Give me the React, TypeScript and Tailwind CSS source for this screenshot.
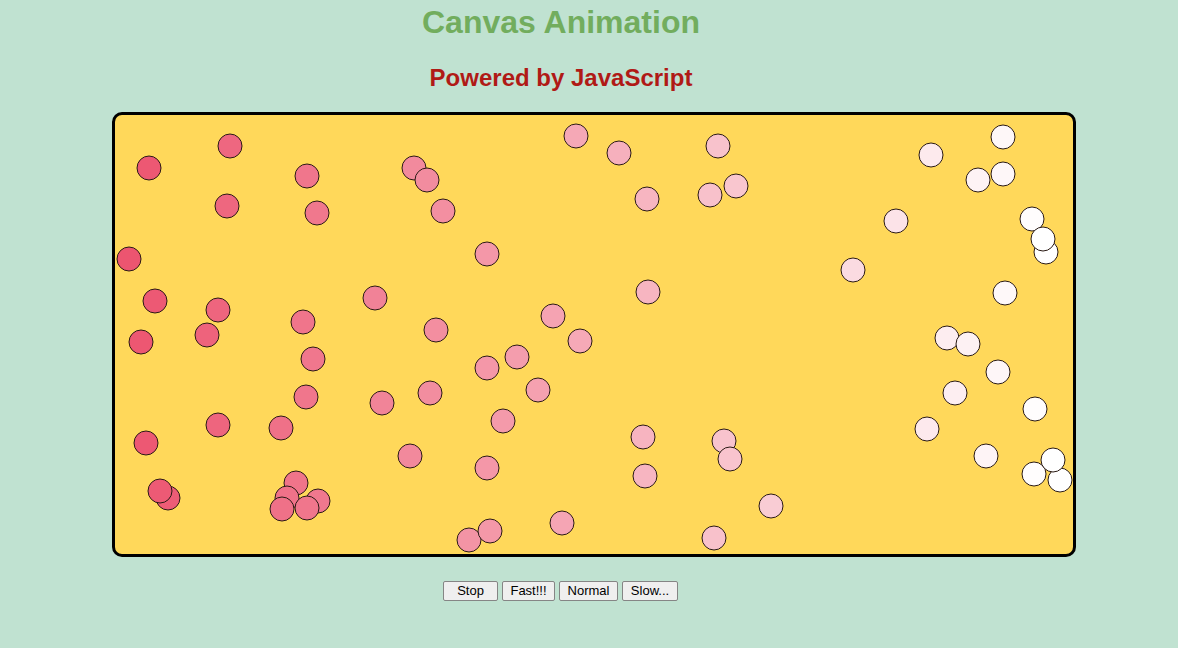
import React from 'react';

// ball centres, in page coordinates (canvas inner area starts at 115,116)
const balls: [number, number][] = [
  [149, 168], [230, 146], [307, 176], [227, 206], [317, 213], [414, 168], [427, 180],
  [443, 211], [129, 259], [487, 254], [155, 301], [218, 310], [375, 298], [141, 342],
  [207, 335], [303, 322], [436, 330], [313, 359], [553, 316], [580, 341], [517, 357],
  [487, 368], [306, 397], [430, 393], [382, 403], [538, 390], [146, 443], [218, 425],
  [281, 428], [503, 421], [410, 456], [487, 468], [168, 498], [160, 491], [296, 483],
  [287, 498], [318, 501], [282, 509], [307, 508], [562, 523], [469, 540], [490, 531],
  [576, 136], [619, 153], [647, 199], [718, 146], [710, 195], [736, 186], [648, 292],
  [643, 437], [724, 441], [730, 459], [645, 476], [771, 506], [714, 538],
  [931, 155], [1003, 137], [978, 180], [1003, 174], [896, 221], [853, 270],
  [1032, 219], [1046, 252], [1043, 239], [1005, 293], [947, 338], [968, 344],
  [998, 372], [955, 393], [1035, 409], [927, 429], [986, 456], [1034, 474],
  [1060, 480], [1053, 460],
];

const OX = 115;
const OY = 115;

function ballColor(x: number) {
  const t = Math.min(1, Math.max(0, (x - OX) / 930));
  const r = Math.round(236 + (255 - 236) * t);
  const g = Math.round(82 + (255 - 82) * t);
  const b = Math.round(110 + (255 - 110) * t);
  return `rgb(${r},${g},${b})`;
}

const buttons = [
  { label: 'Stop', w: 'w-[55px]' },
  { label: 'Fast!!!', w: 'w-[53px]' },
  { label: 'Normal', w: 'w-[59px]' },
  { label: 'Slow...', w: 'w-[56px]' },
];

export default function App() {
  return (
    <div className="min-h-screen bg-[#c0e2d1] font-['Liberation_Sans',Arial,sans-serif]">
      <div className="w-[1122px] pt-[4px]">
        <h1 className="text-center text-[32px] leading-[37px] font-bold text-[#72ad5e]">
          Canvas Animation
        </h1>
        <h2 className="mt-[23px] text-center text-[24px] leading-[28px] font-bold text-[#b01a16]">
          Powered by JavaScript
        </h2>

        <div className="mt-[20px] ml-[112px] w-[964px] h-[445px] border-[3px] border-black rounded-[10px] bg-[#ffd85a] overflow-hidden">
          <svg width="958" height="439" viewBox="0 0 958 439">
            {balls.map(([x, y], i) => (
              <circle
                key={i}
                cx={x - OX}
                cy={y - OY}
                r={12}
                fill={ballColor(x)}
                stroke="#2a1a14"
                strokeWidth={1}
              />
            ))}
          </svg>
        </div>

        <div className="mt-[24px] ml-[-1px] flex justify-center gap-[4px]">
          {buttons.map((b) => (
            <button
              key={b.label}
              className={`${b.w} h-[20px] bg-[#efefef] border border-[#858585] rounded-[2px] text-[13px] leading-[18px] text-black`}
            >
              {b.label}
            </button>
          ))}
        </div>
      </div>
    </div>
  );
}
